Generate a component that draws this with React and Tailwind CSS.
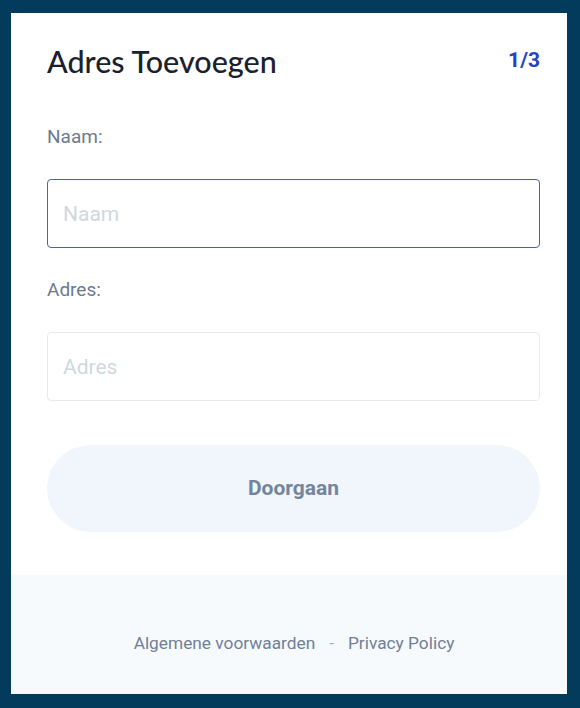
export default function App() {
  return (
    <div className="min-h-[708px] bg-[#023b5b] pt-[13px] pl-[11px] pr-[13px] pb-[14px]">
      <div className="bg-white flex flex-col h-[681px]">
        <div className="pl-[36px] pr-[27px] pt-[30px] pb-[43px] font-['Roboto',sans-serif]">
          <div className="flex items-center justify-between h-[36px]">
            <h1 className="font-['Lato',sans-serif] text-[30.5px] leading-[36px] text-[#1a202c] font-medium">
              Adres Toevoegen
            </h1>
            <span className="text-[21px] font-bold text-[#2741c0]">1/3</span>
          </div>

          <label className="block mt-[46px] text-[19px] leading-[24px] text-[#6b7b8c]">
            Naam:
          </label>
          <input
            type="text"
            placeholder="Naam"
            className="block mt-[30px] w-full h-[69px] rounded-[4px] border border-[#4862b0] pl-[15px] text-[21px] text-[#2d3748] placeholder:text-[#cfd8e2] outline-none"
          />

          <label className="block mt-[30px] text-[19px] leading-[24px] text-[#6b7b8c]">
            Adres:
          </label>
          <input
            type="text"
            placeholder="Adres"
            className="block mt-[30px] w-full h-[69px] rounded-[4px] border border-[#e6eaef] pl-[15px] text-[21px] text-[#2d3748] placeholder:text-[#cfd8e2] outline-none"
          />

          <button className="mt-[44px] w-full h-[87px] rounded-full bg-[#f0f6fc] text-[21px] font-bold text-[#74849a]">
            Doorgaan
          </button>
        </div>

        <div className="flex-1 bg-[#f7fafc] pt-[56px] pl-[10px] flex justify-center font-['Roboto',sans-serif] text-[17.3px] leading-[24px] text-[#718096]">
          <a href="#">Algemene voorwaarden</a>
          <span className="mx-[14px] text-[#a0aec0]">-</span>
          <a href="#">Privacy Policy</a>
        </div>
      </div>
    </div>
  );
}
